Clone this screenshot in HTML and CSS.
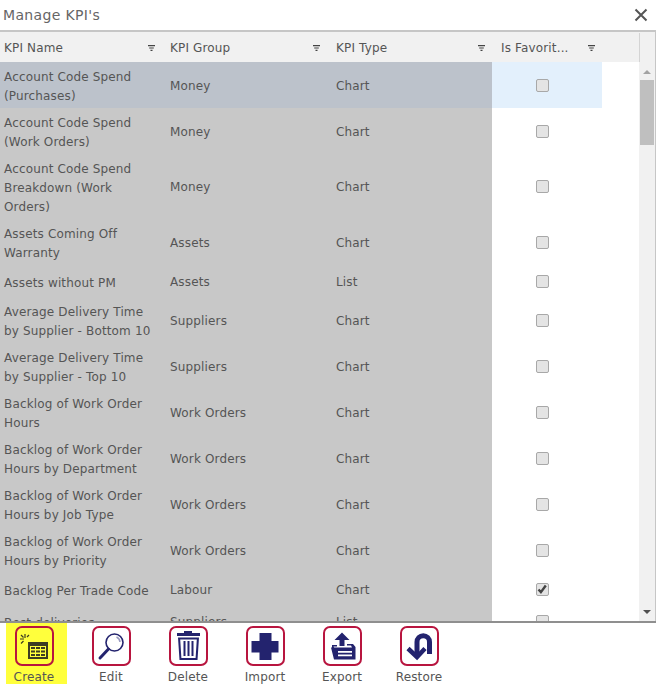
FILE: index.html
```html
<!DOCTYPE html>
<html lang="en">
<head>
  <meta charset="UTF-8">
  <meta name="viewport" content="width=device-width, initial-scale=1.0">
  <title>Manage KPI's</title>
  <link rel="stylesheet" href="styles.css">
</head>
<body>
  <svg class="defs" width="0" height="0">
    <symbol id="filter" viewBox="0 0 7 6"><path d="M0 0h7v1.2H0zM1.2 2.4h4.6v1.2H1.2zM2.5 4.8h2V6h-2z"/></symbol>
  </svg>

  <div class="dialog">
    <!-- Title bar -->
    <div class="title-bar">
      <span class="title">Manage KPI's</span>
      <svg class="close" width="14" height="14" viewBox="0 0 14 14"><path d="M1.5 1.5l11 11M12.5 1.5l-11 11"/></svg>
    </div>

    <!-- Column headers -->
    <div class="head">
      <div class="head-cell col-name">KPI Name<svg class="filter"><use href="#filter"/></svg></div>
      <div class="head-cell col-group">KPI Group<svg class="filter"><use href="#filter"/></svg></div>
      <div class="head-cell col-type">KPI Type<svg class="filter"><use href="#filter"/></svg></div>
      <div class="head-cell col-fav">Is Favorit...<svg class="filter"><use href="#filter"/></svg></div>
      <div class="head-spacer"></div>
    </div>

    <!-- Rows -->
    <div class="grid">
      <div class="rows">
        <div class="row selected"><div class="cell col-name">Account Code Spend (Purchases)</div><div class="cell col-group">Money</div><div class="cell col-type">Chart</div><div class="cell col-fav"><span class="check"></span></div></div>
        <div class="row"><div class="cell col-name">Account Code Spend (Work Orders)</div><div class="cell col-group">Money</div><div class="cell col-type">Chart</div><div class="cell col-fav"><span class="check"></span></div></div>
        <div class="row"><div class="cell col-name">Account Code Spend Breakdown (Work Orders)</div><div class="cell col-group">Money</div><div class="cell col-type">Chart</div><div class="cell col-fav"><span class="check"></span></div></div>
        <div class="row"><div class="cell col-name">Assets Coming Off Warranty</div><div class="cell col-group">Assets</div><div class="cell col-type">Chart</div><div class="cell col-fav"><span class="check"></span></div></div>
        <div class="row"><div class="cell col-name">Assets without PM</div><div class="cell col-group">Assets</div><div class="cell col-type">List</div><div class="cell col-fav"><span class="check"></span></div></div>
        <div class="row"><div class="cell col-name">Average Delivery Time by Supplier - Bottom 10</div><div class="cell col-group">Suppliers</div><div class="cell col-type">Chart</div><div class="cell col-fav"><span class="check"></span></div></div>
        <div class="row"><div class="cell col-name">Average Delivery Time by Supplier - Top 10</div><div class="cell col-group">Suppliers</div><div class="cell col-type">Chart</div><div class="cell col-fav"><span class="check"></span></div></div>
        <div class="row"><div class="cell col-name">Backlog of Work Order Hours</div><div class="cell col-group">Work Orders</div><div class="cell col-type">Chart</div><div class="cell col-fav"><span class="check"></span></div></div>
        <div class="row"><div class="cell col-name">Backlog of Work Order Hours by Department</div><div class="cell col-group">Work Orders</div><div class="cell col-type">Chart</div><div class="cell col-fav"><span class="check"></span></div></div>
        <div class="row"><div class="cell col-name">Backlog of Work Order Hours by Job Type</div><div class="cell col-group">Work Orders</div><div class="cell col-type">Chart</div><div class="cell col-fav"><span class="check"></span></div></div>
        <div class="row"><div class="cell col-name">Backlog of Work Order Hours by Priority</div><div class="cell col-group">Work Orders</div><div class="cell col-type">Chart</div><div class="cell col-fav"><span class="check"></span></div></div>
        <div class="row"><div class="cell col-name">Backlog Per Trade Code</div><div class="cell col-group">Labour</div><div class="cell col-type">Chart</div><div class="cell col-fav"><span class="check checked"><svg width="10" height="10" viewBox="0 0 10 10"><path d="M1.5 5.5l2.4 2.6L8.8 1.5"/></svg></span></div></div>
        <div class="row"><div class="cell col-name">Best deliveries</div><div class="cell col-group">Suppliers</div><div class="cell col-type">List</div><div class="cell col-fav"><span class="check"></span></div></div>
      </div>
      <div class="scrollbar">
        <span class="arrow-up"></span>
        <span class="thumb"></span>
        <span class="arrow-down"></span>
      </div>
    </div>

    <!-- Toolbar -->
    <div class="toolbar">
      <div class="tool active">
        <span class="tool-icon">
          <svg width="30" height="30" viewBox="0 0 30 30">
            <path class="spark" d="M6 3v4M1 8h4M2 4l2.500 2.500M10 4L8 6M2 12.500L4.500 10"/>
            <rect x="9" y="11" width="20" height="17" fill="#3d3d22"/>
            <path d="M11 15h16v11H11z" fill="#ffff3c"/>
            <path d="M12 16h4v2h-4zM17 16h4v2h-4zM22 16h4v2h-4zM12 19.500h4v2h-4zM17 19.500h4v2h-4zM22 19.500h4v2h-4zM12 23h4v2h-4zM17 23h4v2h-4zM22 23h4v2h-4z" fill="#3d3d22"/>
          </svg>
        </span>
        <span class="tool-label">Create</span>
      </div>
      <div class="tool">
        <span class="tool-icon">
          <svg width="30" height="30" viewBox="0 0 30 30">
            <circle cx="18.500" cy="11.500" r="8.500" fill="none" stroke="#23236e" stroke-width="1.600"/>
            <path d="M20.500 6a6 6 0 0 1 3.500 5" fill="none" stroke="#9a9ac0" stroke-width="1.500"/>
            <path d="M12.500 18L4 27" stroke="#23236e" stroke-width="3" stroke-linecap="round"/>
          </svg>
        </span>
        <span class="tool-label">Edit</span>
      </div>
      <div class="tool">
        <span class="tool-icon">
          <svg width="30" height="30" viewBox="0 0 30 30" fill="#23236e">
            <path d="M11 0h8v2h8v3H4V2h7z"/>
            <path d="M5 6.500h21L24.500 29h-18zM7.200 8.500l1.200 18.500h14.200l1.200-18.500z" fill-rule="evenodd"/>
            <path d="M10.500 10h2v15h-2zM14.500 10h2v15h-2zM18.500 10h2v15h-2z"/>
          </svg>
        </span>
        <span class="tool-label">Delete</span>
      </div>
      <div class="tool">
        <span class="tool-icon">
          <svg width="30" height="30" viewBox="0 0 30 30" fill="#23236e">
            <path d="M9.500 2h12v8h7v11.500h-7V29h-12v-7.500h-8V10h8z"/>
          </svg>
        </span>
        <span class="tool-label">Import</span>
      </div>
      <div class="tool">
        <span class="tool-icon">
          <svg width="30" height="30" viewBox="0 0 30 30" fill="#23236e">
            <path d="M15 1.500l7.500 7.500h-5v6h-5V9h-5z"/>
            <path d="M5 14h5v1.500H6.500l1 2H5z"/>
            <path d="M20 13h6l2.500 3v12.500H7l-3-12h21l-1-2h-4z"/>
            <path d="M11 20h14v1.800H11zM11 23.500h14v1.800H11z" fill="#fff"/>
          </svg>
        </span>
        <span class="tool-label">Export</span>
      </div>
      <div class="tool">
        <span class="tool-icon">
          <svg width="30" height="30" viewBox="0 0 30 30" fill="none" stroke="#23236e">
            <path d="M25.500 23V11a6.250 6.250 0 0 0-12.500 0v13" stroke-width="5"/>
            <path d="M4 17.500l9 8.500 8-8.500" stroke-width="4.500"/>
          </svg>
        </span>
        <span class="tool-label">Restore</span>
      </div>
    </div>
  </div>
</body>
</html>
```

FILE: styles.css
```css
/* General Styles */
body {
  margin: 0;
  font-family: 'DejaVu Sans', Verdana, sans-serif;
  font-size: 12px;
  letter-spacing: 0.15px;
  color: #555;
  background-color: #fff;
}

.defs {
  display: block;
  height: 0;
}

.dialog {
  width: 656px;
  height: 689px;
  display: flex;
  flex-direction: column;
  overflow: hidden;
}

/* Title bar */
.title-bar {
  height: 30px;
  flex: none;
  display: flex;
  align-items: center;
  justify-content: space-between;
  padding: 0 8px 0 3px;
  border-bottom: 2px solid #c6c6c6;
}

.title {
  font-size: 14px;
  letter-spacing: 0.35px;
  color: #666;
}

.close path {
  fill: none;
  stroke: #555;
  stroke-width: 2;
}

/* Column headers */
.head {
  height: 29px;
  flex: none;
  display: flex;
  padding-top: 1px;
  box-sizing: content-box;
  background-color: #f1f1f1;
  border-right: 1px solid #c6c6c6;
}

.head-cell {
  display: flex;
  align-items: center;
  justify-content: space-between;
  box-sizing: border-box;
  padding: 0 11px 0 4px;
}

.head-cell.col-type {
  padding-left: 5px;
  padding-right: 7px;
}

.head-cell.col-fav {
  padding-left: 9px;
  padding-right: 7px;
}

.head-spacer {
  flex: 1;
  border-left: 1px solid #d4d4d4;
  margin-left: 37px;
}

.filter {
  width: 7px;
  height: 6px;
  fill: #444;
}

.col-name { width: 166px; }
.col-group { width: 165px; }
.col-type { width: 161px; }
.col-fav { width: 110px; }

/* Rows */
.grid {
  flex: 1;
  min-height: 0;
  display: flex;
  border-right: 1px solid #c6c6c6;
}

.rows {
  flex: 1;
  min-width: 0;
  overflow: hidden;
}

.row {
  display: flex;
  min-height: 32px;
  line-height: 19px;
}

.cell {
  box-sizing: border-box;
  display: flex;
  align-items: center;
  padding: 5px 4px 3px;
  background-color: #c8c8c8;
}

.cell.col-name {
  padding: 6px 10px 2px 4px;
}

.cell.col-type {
  padding-left: 5px;
}

.selected .cell {
  background-color: #bcc2cb;
}

.cell.col-fav {
  background-color: #fff;
  justify-content: center;
  padding: 4px 14px 4px 4px;
}

.selected .cell.col-fav {
  background-color: #e3f0fc;
}

/* Checkboxes */
.check {
  width: 11px;
  height: 11px;
  display: flex;
  align-items: center;
  justify-content: center;
  border: 1px solid #a8a8a8;
  border-radius: 2px;
  background-color: #e4e4e4;
}

.check path {
  fill: none;
  stroke: #444;
  stroke-width: 2.4;
}

/* Scrollbar */
.scrollbar {
  width: 16px;
  flex: none;
  display: flex;
  flex-direction: column;
  align-items: center;
  background-color: #f1f1f1;
}

.arrow-up,
.arrow-down {
  width: 0;
  height: 0;
  border-left: 4px solid transparent;
  border-right: 4px solid transparent;
}

.arrow-up {
  margin-top: 8px;
  border-bottom: 4px solid #a3a3a3;
}

.arrow-down {
  margin-top: auto;
  margin-bottom: 7px;
  border-top: 4px solid #505050;
}

.thumb {
  width: 14px;
  height: 65px;
  margin-top: 6px;
  background-color: #bfbfbf;
}

/* Toolbar */
.toolbar {
  height: 68px;
  flex: none;
  display: flex;
  padding-left: 6px;
  border-top: 2px solid #8f8f8f;
  box-sizing: border-box;
}

.tool {
  width: 61px;
  height: 61px;
  margin-right: 16px;
  padding: 3px 5px 0 0;
  display: flex;
  flex-direction: column;
  align-items: center;
  box-sizing: border-box;
}

.tool.active {
  background-color: #ffff3c;
}

.tool-icon {
  width: 39px;
  height: 40px;
  box-sizing: border-box;
  display: flex;
  align-items: center;
  justify-content: center;
  border: 2px solid #b8153f;
  border-radius: 7px;
}

.tool-label {
  margin-top: 4px;
  color: #555;
}

.spark {
  fill: none;
  stroke: #3d3d22;
  stroke-width: 1.2;
}
```
